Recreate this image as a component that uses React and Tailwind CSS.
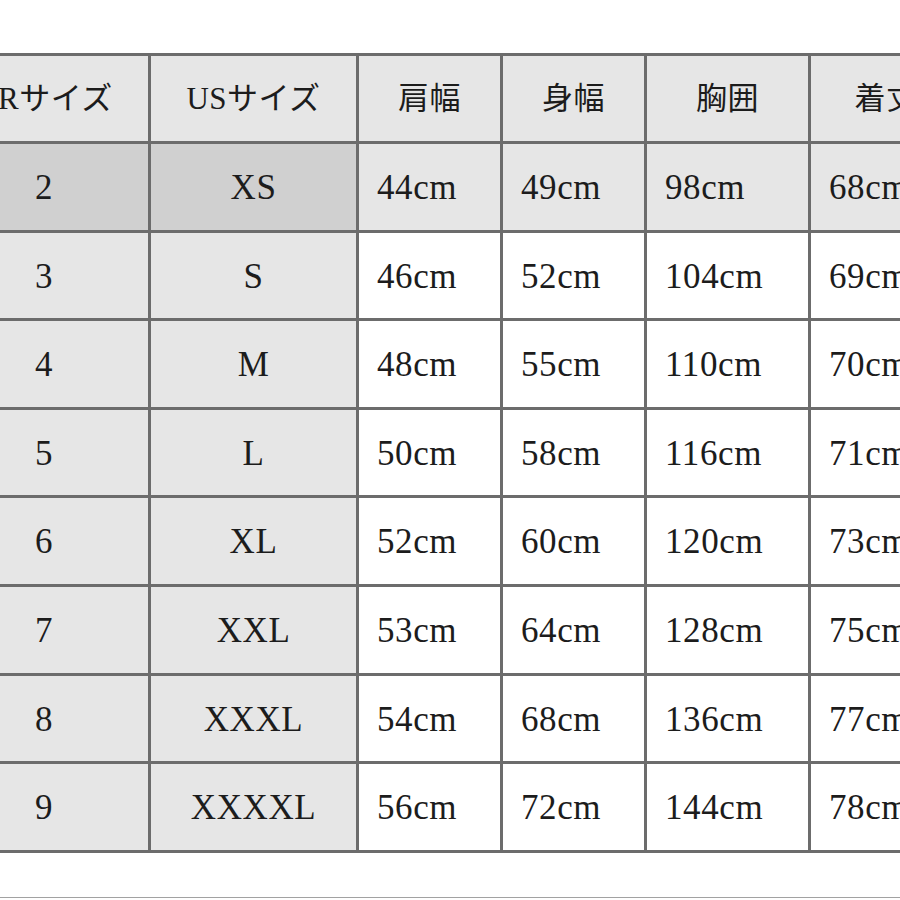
const headers = ["KRサイズ", "USサイズ", "肩幅", "身幅", "胸囲", "着丈"];

const rows = [
  ["2", "XS", "44cm", "49cm", "98cm", "68cm"],
  ["3", "S", "46cm", "52cm", "104cm", "69cm"],
  ["4", "M", "48cm", "55cm", "110cm", "70cm"],
  ["5", "L", "50cm", "58cm", "116cm", "71cm"],
  ["6", "XL", "52cm", "60cm", "120cm", "73cm"],
  ["7", "XXL", "53cm", "64cm", "128cm", "75cm"],
  ["8", "XXXL", "54cm", "68cm", "136cm", "77cm"],
  ["9", "XXXXL", "56cm", "72cm", "144cm", "78cm"],
];

export default function App() {
  return (
    <div
      className="w-[900px] h-[900px] bg-white overflow-hidden text-[#1c1c1c]"
      style={{ fontFamily: '"Liberation Serif", "Noto Sans CJK JP", serif' }}
    >
      {/* size table, left edge runs off the page */}
      <div className="mt-[53px] ml-[-63px] w-max grid grid-cols-[208px_205px_141px_141px_161px_150px] grid-rows-[85px_repeat(8,85.6px)] gap-[3px] p-[3px] bg-[#6c6c6c]">
        {headers.map((h) => (
          <div
            key={h}
            className="bg-[#e6e6e6] flex items-center justify-center pt-[2px] text-[31px] tracking-[0.5px]"
          >
            {h}
          </div>
        ))}
        {rows.map((r, ri) =>
          r.map((cell, ci) => {
            const isSize = ci < 2;
            let bg = "bg-white";
            if (ri === 0) bg = isSize ? "bg-[#d0d0d0]" : "bg-[#e6e6e6]";
            else if (isSize) bg = "bg-[#e6e6e6]";
            return (
              <div
                key={ri + "-" + ci}
                className={`${bg} flex items-center pt-[3px] text-[35px] tracking-[0.6px] ${
                  isSize ? "justify-center" : "justify-start pl-[18px]"
                }`}
              >
                {cell}
              </div>
            );
          })
        )}
      </div>

      <div className="mt-[44px] h-px w-full bg-[#a2a2a2]" />
    </div>
  );
}
